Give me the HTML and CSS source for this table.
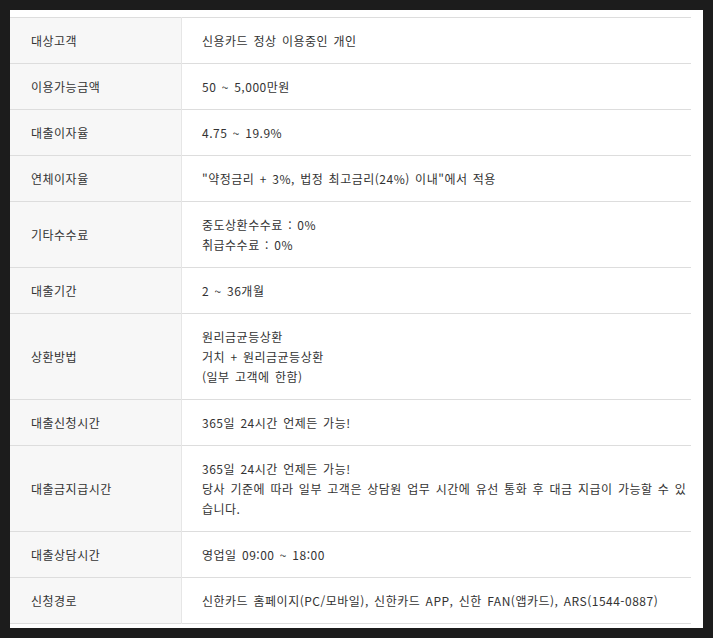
FILE: index.html
```html
<!DOCTYPE html>
<html lang="ko">
<head>
<meta charset="utf-8">
<title>대출 안내</title>
<link rel="stylesheet" href="styles.css">
</head>
<body>
<div class="panel">
  <table class="info">
    <tbody>
      <tr><th>대상고객</th><td>신용카드 정상 이용중인 개인</td></tr>
      <tr><th>이용가능금액</th><td>50 ~ 5,000만원</td></tr>
      <tr><th>대출이자율</th><td>4.75 ~ 19.9%</td></tr>
      <tr><th>연체이자율</th><td>"약정금리 + 3%, 법정 최고금리(24%) 이내"에서 적용</td></tr>
      <tr><th>기타수수료</th><td>중도상환수수료 : 0%<br>취급수수료 : 0%</td></tr>
      <tr><th>대출기간</th><td>2 ~ 36개월</td></tr>
      <tr><th>상환방법</th><td>원리금균등상환<br>거치 + 원리금균등상환<br>(일부 고객에 한함)</td></tr>
      <tr><th>대출신청시간</th><td>365일 24시간 언제든 가능!</td></tr>
      <tr><th>대출금지급시간</th><td>365일 24시간 언제든 가능!<br>당사 기준에 따라 일부 고객은 상담원 업무 시간에 유선 통화 후 대금 지급이 가능할 수 있습니다.</td></tr>
      <tr><th>대출상담시간</th><td>영업일 09:00 ~ 18:00</td></tr>
      <tr><th>신청경로</th><td>신한카드 홈페이지(PC/모바일), 신한카드 APP, 신한 FAN(앱카드), ARS(1544-0887)</td></tr>
    </tbody>
  </table>
</div>
</body>
</html>
```

FILE: styles.css
```css
html, body {
  margin: 0;
  padding: 0;
}
body {
  background: #1c1c1c;
  padding: 10px;
  width: 713px;
  height: 638px;
  box-sizing: border-box;
  font-family: "Noto Sans CJK KR", "Noto Sans", sans-serif;
  font-size: 12px;
  color: #333;
}
.panel {
  background: #fff;
  width: 693px;
  height: 618px;
  padding-top: 7px;
  box-sizing: border-box;
}
.info {
  width: 681px;
  border-collapse: collapse;
  border-top: 1px solid #dddddd;
  table-layout: fixed;
}
.info tr {
  border-bottom: 1px solid #dddddd;
}
.info th,
.info td {
  line-height: 20px;
  padding: 13px 0 12px;
  vertical-align: middle;
  text-align: left;
  font-weight: normal;
  letter-spacing: 0.5px;
  word-spacing: 1.5px;
}
.info th {
  width: 150px;
  padding-left: 21px;
  background: #f7f7f7;
  border-right: 1px solid #e6e6e6;
}
.info td {
  padding-left: 20px;
  padding-right: 2px;
}
```
